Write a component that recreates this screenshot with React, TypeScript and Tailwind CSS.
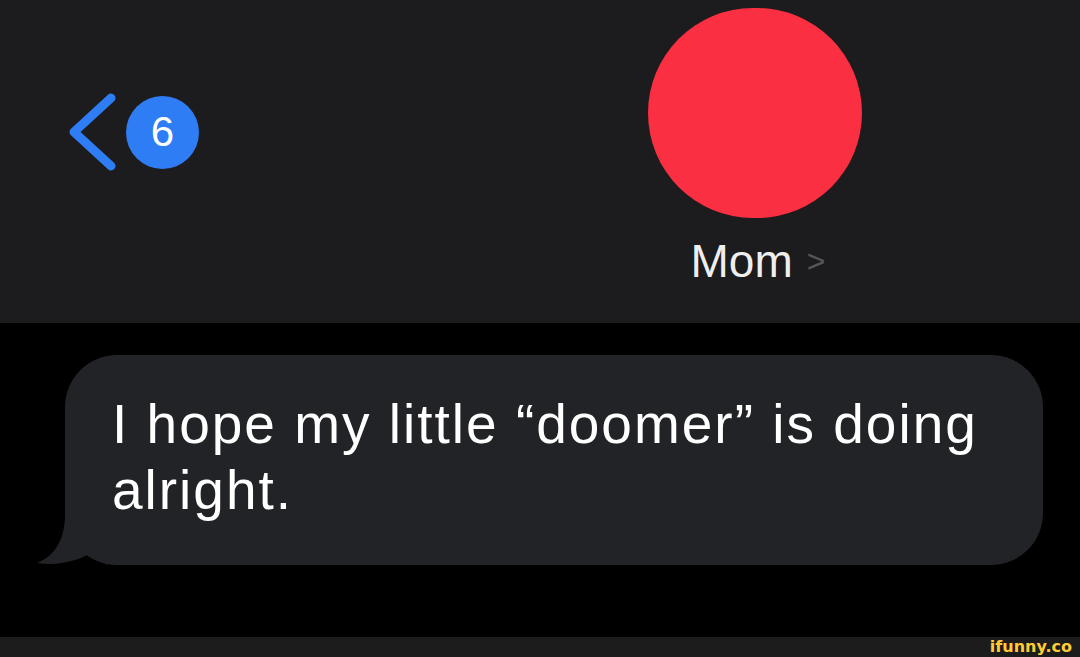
export default function App() {
  return (
    <main className="w-[1080px] h-[657px] flex flex-col bg-black overflow-hidden font-['Liberation_Sans',sans-serif]">
      <header className="h-[323px] shrink-0 bg-[#1c1b1d] relative">
        <div className="absolute left-[64px] top-[92px] flex items-center gap-[6px]">
          <svg width="56" height="80" viewBox="0 0 56 80">
            <path d="M47 6 L10 40 L47 74" fill="none" stroke="#2f7df5" strokeWidth="9" strokeLinecap="round" strokeLinejoin="round" />
          </svg>
          <div className="w-[73px] h-[73px] rounded-full bg-[#2f7df5] flex items-center justify-center text-white text-[42px] leading-none">6</div>
        </div>
        <div className="flex flex-col items-center pt-[8px] pl-[430px]">
          <div className="w-[214px] h-[210px] rounded-full bg-[#fa2f41]" />
          <div className="mt-[20px] flex items-center gap-[14px] pl-[6px]">
            <span className="text-[46px] text-[#eeeeee] leading-none">Mom</span>
            <span className="text-[32px] text-[#555557] leading-none font-light">&gt;</span>
          </div>
        </div>
      </header>
      <section className="flex-1 pt-[32px] pl-[65px]">
        <div className="relative w-[978px] h-[210px] rounded-[52px] bg-[#222326] pl-[47px] pt-[36px]">
          <svg className="absolute left-[-28px] bottom-0" width="70" height="50" viewBox="0 0 70 50">
            <path d="M28 0 C28 26 16 42 0 48 C22 51 40 46 54 38 L70 50 L70 0 Z" fill="#222326" />
          </svg>
          <p className="relative text-[55px] leading-[66px] text-white tracking-[2px]">
            I hope my little “doomer” is doing
            <br />
            alright.
          </p>
        </div>
      </section>
      <footer className="h-[20px] shrink-0 bg-[#1c1c1c] flex items-center justify-end pr-[8px]">
        <span className="text-[16px] font-bold text-[#ffcc33] leading-[20px] font-['DejaVu_Sans',sans-serif]">ifunny.co</span>
      </footer>
    </main>
  );
}
